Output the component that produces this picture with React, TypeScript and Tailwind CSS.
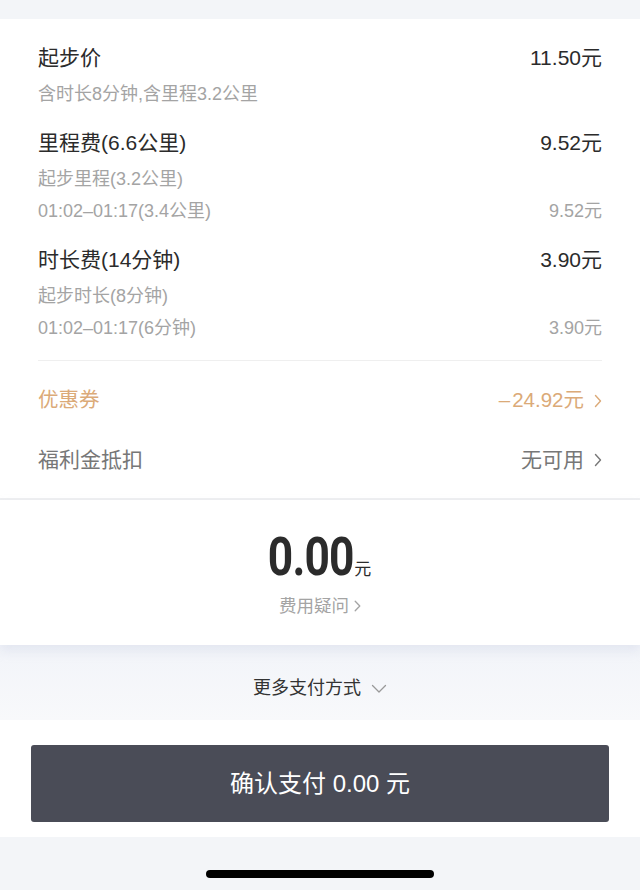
const font = { fontFamily: '"Liberation Sans", "Noto Sans CJK SC", sans-serif' };

const fees = [
    {
        title: '起步价',
        amount: '11.50元',
        details: [{ label: '含时长8分钟,含里程3.2公里', amount: '' }],
    },
    {
        title: '里程费(6.6公里)',
        amount: '9.52元',
        details: [
            { label: '起步里程(3.2公里)', amount: '' },
            { label: '01:02–01:17(3.4公里)', amount: '9.52元' },
        ],
    },
    {
        title: '时长费(14分钟)',
        amount: '3.90元',
        details: [
            { label: '起步时长(8分钟)', amount: '' },
            { label: '01:02–01:17(6分钟)', amount: '3.90元' },
        ],
    },
];

function Chevron({ color }: { color: string }) {
    return (
        <svg width="8" height="14" viewBox="0 0 8 14" fill="none" className="ml-[10px]">
            <polyline points="1.5,1.5 6.5,7 1.5,12.5" stroke={color} strokeWidth="1.4" strokeLinecap="round" strokeLinejoin="round" />
        </svg>
    );
}

export default function App() {
    return (
        <div className="w-[640px] h-[890px] bg-[#f3f5f8] overflow-hidden flex flex-col" style={font}>
            {/* top strip */}
            <div className="h-[19px] shrink-0" />

            {/* ===== fee detail card ===== */}
            <div className="bg-white px-[38px] pt-[25px] pb-[9px] border-b-2 border-[#eeeff1]">
                <div className="flex flex-col gap-[19px]">
                    {fees.map((f, i) => (
                        <div key={i}>
                            <div className="h-[28px] flex items-center justify-between text-[21px] text-[#2b2b2b]">
                                <span>{f.title}</span>
                                <span>{f.amount}</span>
                            </div>
                            <div className="mt-[6px]">
                                {f.details.map((d, j) => (
                                    <div key={j} className="h-[32px] flex items-center justify-between text-[18px] text-[#a4a4a4]">
                                        <span>{d.label}</span>
                                        <span>{d.amount}</span>
                                    </div>
                                ))}
                            </div>
                        </div>
                    ))}
                </div>

                <div className="mt-[16px] h-px bg-[#efefef]" />

                <div className="mt-[10px]">
                    <div className="h-[59px] flex items-center justify-between text-[20.5px] text-[#dbaa78]">
                        <span>优惠券</span>
                        <span className="flex items-center">
                            <span className="mr-[2px]">–</span>24.92元
                            <Chevron color="#dbaa78" />
                        </span>
                    </div>
                    <div className="h-[59px] flex items-center justify-between text-[21px] text-[#777]">
                        <span>福利金抵扣</span>
                        <span className="flex items-center">
                            无可用
                            <Chevron color="#777" />
                        </span>
                    </div>
                </div>
            </div>

            {/* ===== total ===== */}
            <div className="bg-white h-[145px] flex flex-col items-center shadow-[0_6px_10px_rgba(200,205,225,0.35)] relative">
                <div className="mt-[30px] flex items-baseline text-[#2b2b2b]">
                    <span
                        className="text-[54px] leading-[54px] font-bold tracking-[-1px] scale-x-[0.82] origin-right -ml-[20px]"
                        style={{ fontFamily: 'Roboto, sans-serif' }}
                    >
                        0.00
                    </span>
                    <span className="text-[17px] ml-[1px]">元</span>
                </div>
                <div className="mt-[9px] flex items-center text-[17.5px] text-[#a4a4a4]">
                    费用疑问
                    <svg width="7" height="12" viewBox="0 0 7 12" fill="none" className="ml-[5px]">
                        <polyline points="1.2,1.2 5.8,6 1.2,10.8" stroke="#a4a4a4" strokeWidth="1.3" strokeLinecap="round" strokeLinejoin="round" />
                    </svg>
                </div>
            </div>

            {/* ===== more payment methods ===== */}
            <div className="h-[75px] flex items-center justify-center pt-[12px] text-[18px] text-[#333] bg-gradient-to-b from-[#f2f4f9] to-[#f8f9fb]">
                更多支付方式
                <svg width="16" height="10" viewBox="0 0 16 10" fill="none" className="ml-[10px]">
                    <polyline points="1.5,1.5 8,8 14.5,1.5" stroke="#999" strokeWidth="1.3" strokeLinecap="round" strokeLinejoin="round" />
                </svg>
            </div>

            {/* ===== confirm button ===== */}
            <div className="bg-white h-[117px] px-[31px] pt-[25px]">
                <div className="h-[77px] rounded-[3px] bg-[#4a4c57] flex items-center justify-center text-white text-[24px]">
                    确认支付 0.00 元
                </div>
            </div>

            {/* home indicator */}
            <div className="flex-1 flex justify-center pt-[33px]">
                <div className="w-[228px] h-[8px] rounded-full bg-black" />
            </div>
        </div>
    );
}
